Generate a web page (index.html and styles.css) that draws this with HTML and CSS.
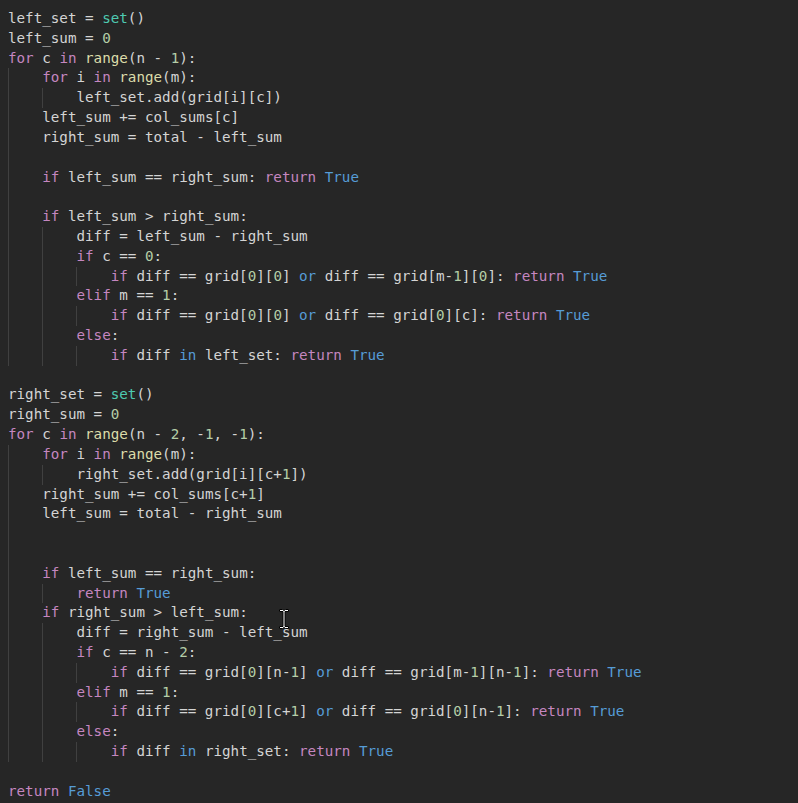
FILE: index.html
```html
<!DOCTYPE html>
<html>
<head>
<meta charset="utf-8">
<link rel="stylesheet" href="styles.css">
</head>
<body>
<div class="editor">
<div class="ln">left_set = <span class="t">set</span>()</div>
<div class="ln">left_sum = <span class="n">0</span></div>
<div class="ln"><span class="k">for</span> c <span class="k">in</span> <span class="f">range</span>(n - <span class="n">1</span>):</div>
<div class="ln"><span class="ig"></span><span class="k">for</span> i <span class="k">in</span> <span class="f">range</span>(m):</div>
<div class="ln"><span class="ig"></span><span class="ig"></span>left_set.add(grid[i][c])</div>
<div class="ln"><span class="ig"></span>left_sum += col_sums[c]</div>
<div class="ln"><span class="ig"></span>right_sum = total - left_sum</div>
<div class="ln"><span class="ig"></span></div>
<div class="ln"><span class="ig"></span><span class="k">if</span> left_sum == right_sum: <span class="k">return</span> <span class="b">True</span></div>
<div class="ln"><span class="ig"></span></div>
<div class="ln"><span class="ig"></span><span class="k">if</span> left_sum &gt; right_sum:</div>
<div class="ln"><span class="ig"></span><span class="ig"></span>diff = left_sum - right_sum</div>
<div class="ln"><span class="ig"></span><span class="ig"></span><span class="k">if</span> c == <span class="n">0</span>:</div>
<div class="ln"><span class="ig"></span><span class="ig"></span><span class="ig"></span><span class="k">if</span> diff == grid[<span class="n">0</span>][<span class="n">0</span>] <span class="b">or</span> diff == grid[m-<span class="n">1</span>][<span class="n">0</span>]: <span class="k">return</span> <span class="b">True</span></div>
<div class="ln"><span class="ig"></span><span class="ig"></span><span class="k">elif</span> m == <span class="n">1</span>:</div>
<div class="ln"><span class="ig"></span><span class="ig"></span><span class="ig"></span><span class="k">if</span> diff == grid[<span class="n">0</span>][<span class="n">0</span>] <span class="b">or</span> diff == grid[<span class="n">0</span>][c]: <span class="k">return</span> <span class="b">True</span></div>
<div class="ln"><span class="ig"></span><span class="ig"></span><span class="k">else</span>:</div>
<div class="ln"><span class="ig"></span><span class="ig"></span><span class="ig"></span><span class="k">if</span> diff <span class="b">in</span> left_set: <span class="k">return</span> <span class="b">True</span></div>
<div class="ln"></div>
<div class="ln">right_set = <span class="t">set</span>()</div>
<div class="ln">right_sum = <span class="n">0</span></div>
<div class="ln"><span class="k">for</span> c <span class="k">in</span> <span class="f">range</span>(n - <span class="n">2</span>, -<span class="n">1</span>, -<span class="n">1</span>):</div>
<div class="ln"><span class="ig"></span><span class="k">for</span> i <span class="k">in</span> <span class="f">range</span>(m):</div>
<div class="ln"><span class="ig"></span><span class="ig"></span>right_set.add(grid[i][c+<span class="n">1</span>])</div>
<div class="ln"><span class="ig"></span>right_sum += col_sums[c+<span class="n">1</span>]</div>
<div class="ln"><span class="ig"></span>left_sum = total - right_sum</div>
<div class="ln"><span class="ig"></span></div>
<div class="ln"><span class="ig"></span></div>
<div class="ln"><span class="ig"></span><span class="k">if</span> left_sum == right_sum:</div>
<div class="ln"><span class="ig"></span><span class="ig"></span><span class="k">return</span> <span class="b">True</span></div>
<div class="ln"><span class="ig"></span><span class="k">if</span> right_sum &gt; left_sum:</div>
<div class="ln"><span class="ig"></span><span class="ig"></span>diff = right_sum - left_sum</div>
<div class="ln"><span class="ig"></span><span class="ig"></span><span class="k">if</span> c == n - <span class="n">2</span>:</div>
<div class="ln"><span class="ig"></span><span class="ig"></span><span class="ig"></span><span class="k">if</span> diff == grid[<span class="n">0</span>][n-<span class="n">1</span>] <span class="b">or</span> diff == grid[m-<span class="n">1</span>][n-<span class="n">1</span>]: <span class="k">return</span> <span class="b">True</span></div>
<div class="ln"><span class="ig"></span><span class="ig"></span><span class="k">elif</span> m == <span class="n">1</span>:</div>
<div class="ln"><span class="ig"></span><span class="ig"></span><span class="ig"></span><span class="k">if</span> diff == grid[<span class="n">0</span>][c+<span class="n">1</span>] <span class="b">or</span> diff == grid[<span class="n">0</span>][n-<span class="n">1</span>]: <span class="k">return</span> <span class="b">True</span></div>
<div class="ln"><span class="ig"></span><span class="ig"></span><span class="k">else</span>:</div>
<div class="ln"><span class="ig"></span><span class="ig"></span><span class="ig"></span><span class="k">if</span> diff <span class="b">in</span> right_set: <span class="k">return</span> <span class="b">True</span></div>
<div class="ln"></div>
<div class="ln"><span class="k">return</span> <span class="b">False</span></div>
</div>
<svg class="ibeam" width="12" height="22" viewBox="0 0 12 22">
<path d="M1.5 1.5h3l1.5 1 1.5-1h3v2h-3.5v15h3.5v2h-3l-1.5-1-1.5 1h-3v-2h3.5v-15h-3.5z" fill="#fff" stroke="#000" stroke-width="1"/>
</svg>
</body>
</html>
```
FILE: styles.css
```css
html, body {
  margin: 0;
  padding: 0;
  background: #262626;
  height: 100%;
}
body {
  position: relative;
  overflow: hidden;
}
.editor {
  padding: 9px 0 0 8px;
  font-family: "DejaVu Sans Mono", "Liberation Mono", monospace;
  font-size: 14.22px;
  color: #d4d4d4;
}
.ln {
  height: 19.82px;
  line-height: 19.82px;
  white-space: pre;
}
.ig {
  display: inline-block;
  width: 4ch;
  height: 19.82px;
  vertical-align: top;
  box-shadow: inset 1px 0 0 #404040;
}
.k { color: #c586c0; }
.b { color: #569cd6; }
.f { color: #dcdcaa; }
.t { color: #4ec9b0; }
.n { color: #b5cea8; }
.ibeam {
  position: absolute;
  left: 278px;
  top: 608px;
}
```
